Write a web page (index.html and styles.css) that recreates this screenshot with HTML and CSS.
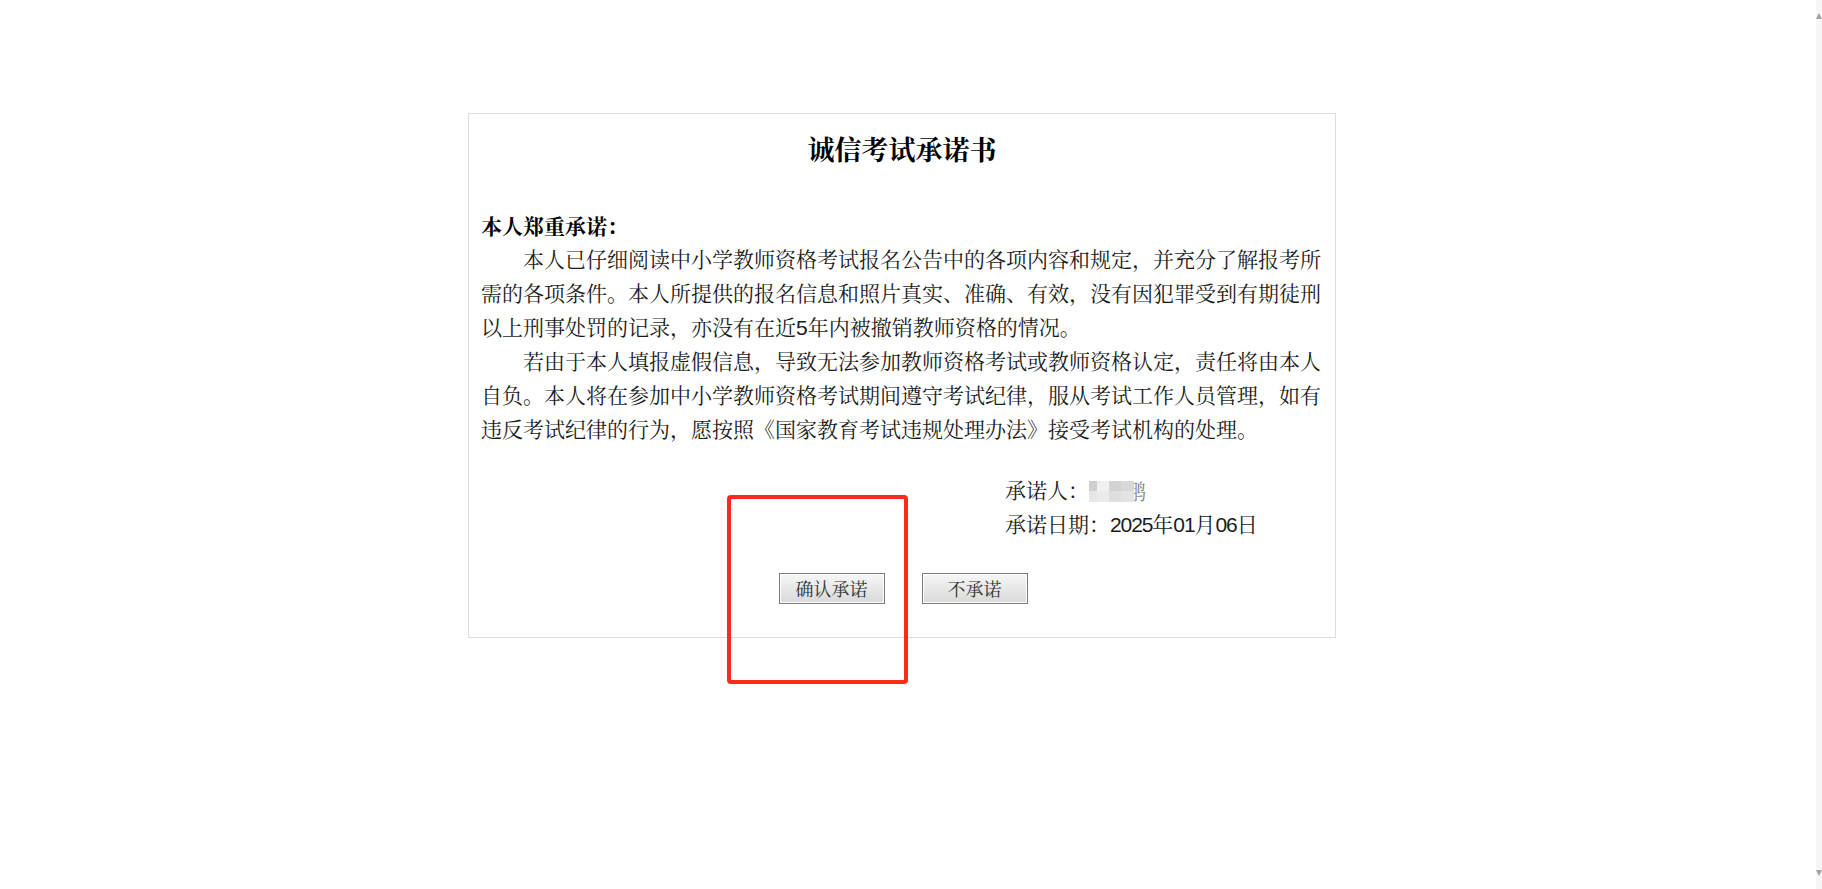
FILE: index.html
```html
<!DOCTYPE html>
<html lang="zh-CN">
<head>
<meta charset="utf-8">
<title>诚信考试承诺书</title>
<link rel="stylesheet" href="styles.css">
</head>
<body>
<div class="page">
  <main class="main">
    <section class="letter">
      <h1 class="title">诚信考试承诺书</h1>
      <p class="lead">本人郑重承诺：</p>
      <div class="body">
        <p class="para">本人已仔细阅读中小学教师资格考试报名公告中的各项内容和规定，并充分了解报考所需的各项条件。本人所提供的报名信息和照片真实、准确、有效，没有因犯罪受到有期徒刑以上刑事处罚的记录，亦没有在近5年内被撤销教师资格的情况。</p>
        <p class="para">若由于本人填报虚假信息，导致无法参加教师资格考试或教师资格认定，责任将由本人自负。本人将在参加中小学教师资格考试期间遵守考试纪律，服从考试工作人员管理，如有违反考试纪律的行为，愿按照《国家教育考试违规处理办法》接受考试机构的处理。</p>
      </div>
      <div class="sign">
        <div class="sign-line">承诺人：<span class="blur"><span class="cell c1"></span><span class="cell c2"></span><span class="cell c3"></span><span class="cell c4"></span><span class="tail">鹏</span></span></div>
        <div class="sign-line">承诺日期：<span class="num">2025</span>年<span class="num">01</span>月<span class="num">06</span>日</div>
      </div>
      <div class="actions">
        <button class="btn" type="button">确认承诺</button>
        <button class="btn" type="button">不承诺</button>
      </div>
    </section>
    <div class="mark"></div>
  </main>
  <div class="scrollbar">
    <span class="arrow up"></span>
    <span class="arrow down"></span>
  </div>
</div>
</body>
</html>
```

FILE: styles.css
```css
html, body {
  margin: 0;
  padding: 0;
  background: #fff;
}

body {
  font-family: "Liberation Sans", "Noto Serif CJK SC", "Noto Sans CJK SC", sans-serif;
  color: #111;
}

.page {
  display: flex;
  width: 1822px;
  height: 889px;
  overflow: hidden;
}

.main {
  flex: 1;
  position: relative;
  padding-top: 113px;
}

.letter {
  box-sizing: border-box;
  width: 868px;
  margin-left: 468px;
  border: 1px solid #dcdcdc;
  padding: 15px 12px 33px 12px;
}

.title {
  margin: 0;
  font-family: "Noto Serif CJK SC", "Noto Sans CJK SC", serif;
  font-size: 27px;
  line-height: 40px;
  font-weight: bold;
  text-align: center;
  color: #000;
}

.lead {
  margin: 42px 0 0;
  font-family: "Noto Serif CJK SC", "Noto Sans CJK SC", serif;
  font-size: 21px;
  line-height: 28px;
  font-weight: bold;
  color: #000;
}

.body {
  margin-top: 4px;
}

.para {
  margin: 0;
  font-size: 21px;
  line-height: 34px;
  text-indent: 42px;
  color: #1a1a1a;
}

.sign {
  margin: 27px 0 0 524px;
}

.sign-line {
  font-size: 21px;
  line-height: 34px;
  color: #1a1a1a;
  display: flex;
  align-items: center;
}

.num {
  letter-spacing: -1.1px;
}

.blur {
  display: inline-flex;
  align-items: center;
  height: 21px;
}

.cell {
  display: inline-block;
  height: 21px;
}

.c1 {
  width: 8px;
  background: linear-gradient(#cfcfcf 50%, #e6e6e6 50%);
}

.c2 {
  width: 12px;
  background: linear-gradient(#f0f0f0 50%, #ebebeb 50%);
}

.c3 {
  width: 12px;
  background: linear-gradient(#d3d3d3 50%, #dedede 50%);
}

.c4 {
  width: 4px;
  background: linear-gradient(#d8d8d8 50%, #e2e2e2 50%);
}

.tail {
  position: relative;
  display: inline-block;
  font-size: 21px;
  line-height: 21px;
  color: #8a8a8a;
}

.tail::before {
  content: "";
  position: absolute;
  left: 0;
  top: 0;
  width: 9px;
  height: 21px;
  background: linear-gradient(#d8d8d8 50%, #e4e4e4 50%);
}

.actions {
  display: flex;
  justify-content: center;
  gap: 37px;
  margin-top: 31px;
  padding-left: 2px;
}

.btn {
  box-sizing: border-box;
  width: 106px;
  height: 31px;
  padding: 0;
  border: 1px solid #7a7a7a;
  box-shadow: inset 0 0 0 1px #fdfdfd;
  background: linear-gradient(#f6f6f6, #d9d9d9);
  font-family: "Noto Serif CJK SC", "Noto Sans CJK SC", sans-serif;
  font-size: 18px;
  line-height: 27px;
  color: #333;
}

.mark {
  position: absolute;
  left: 727px;
  top: 495px;
  width: 181px;
  height: 189px;
  box-sizing: border-box;
  border: 4px solid #ff2a1e;
  border-radius: 4px;
}

.scrollbar {
  width: 6px;
  background: #f6f6f6;
  display: flex;
  flex-direction: column;
  justify-content: space-between;
  align-items: center;
  padding: 13px 0 13px;
}

.arrow {
  width: 0;
  height: 0;
  border-left: 3px solid transparent;
  border-right: 3px solid transparent;
}

.arrow.up {
  border-bottom: 6px solid #a0a0a0;
}

.arrow.down {
  border-top: 6px solid #a0a0a0;
}
```
